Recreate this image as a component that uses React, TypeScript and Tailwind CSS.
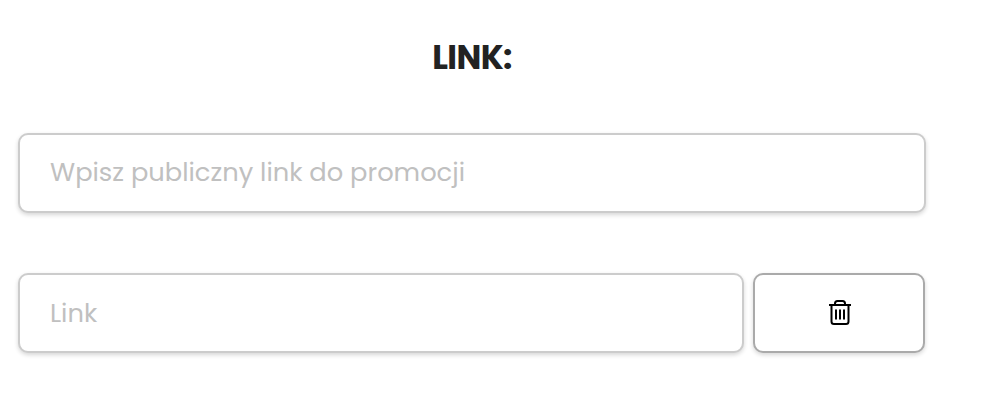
const App = () => {
  return (
    <div className="w-[991px] h-[415px] bg-white overflow-hidden font-['Poppins','Lato','Noto_Sans',sans-serif]">
      <div className="w-[944px] pl-[18px] pt-[36px]">
        <h2 className="w-[908px] text-center text-[33px] leading-[44px] font-bold tracking-[-0.6px] text-[#222]">
          LINK:
        </h2>
        <input
          placeholder="Wpisz publiczny link do promocji"
          className="mt-[53px] block w-[908px] h-[80px] px-[30px] pb-[2px] rounded-[10px] border-2 border-[#ccc] bg-white text-[25.76px] shadow-[0_2px_4px_rgba(0,0,0,0.16)] placeholder:text-[#c0c0c0]"
        />
        <div className="mt-[60px] flex gap-[9px] w-[907px]">
          <input
            placeholder="Link"
            className="block w-[726px] h-[80px] px-[30px] rounded-[10px] border-2 border-[#ccc] bg-white text-[25.76px] shadow-[0_2px_4px_rgba(0,0,0,0.16)] placeholder:text-[#c0c0c0]"
          />
          <button className="flex-1 h-[80px] pl-[1px] pb-[1px] flex items-center justify-center rounded-[10px] border-2 border-[#aaa] bg-white shadow-[0_2px_4px_rgba(0,0,0,0.16)]">
            <svg width="24" height="25" viewBox="0 0 24 25" fill="none" stroke="#000" strokeWidth="2">
              <path d="M1 5H23" />
              <path d="M7 5V3.5C7 2 8 1 9.5 1H14.5C16 1 17 2 17 3.5V5" />
              <path d="M3.5 5V21.5C3.5 23 4.5 24 6 24H18C19.5 24 20.5 23 20.5 21.5V5" />
              <path d="M8 9.5V19.5M12 9.5V19.5M16 9.5V19.5" />
            </svg>
          </button>
        </div>
      </div>
    </div>
  );
};

export default App;
